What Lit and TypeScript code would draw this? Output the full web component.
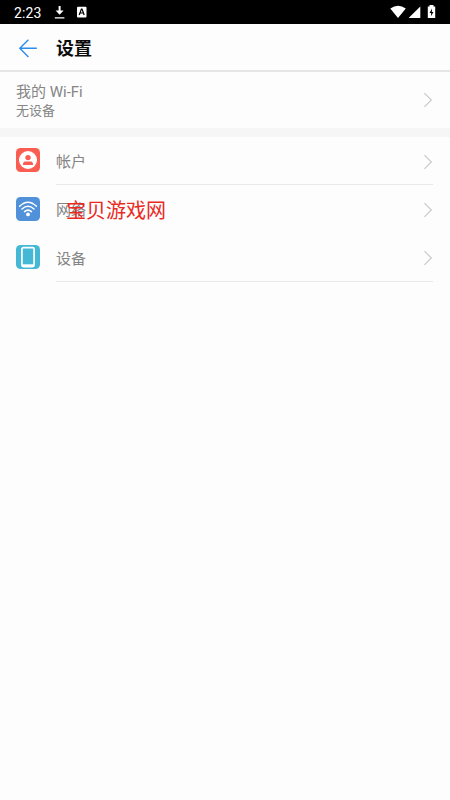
import { LitElement, html, css, svg } from "lit";
import { customElement } from "lit/decorators.js";

const chevron = html`<svg class="chevron" width="10" height="16" viewBox="0 0 10 16">
  <path d="M1.4 1.2 8.4 8 1.4 14.8" fill="none" stroke="#c8c8c8" stroke-width="1.1" />
</svg>`;

const accountIcon = svg`
  <rect width="24" height="24" rx="4.5" fill="#fa5d51" />
  <circle cx="12" cy="12" r="9" fill="#fff" />
  <circle cx="12" cy="9.6" r="2.7" fill="#fa5d51" />
  <path d="M7 17v-1.2c0-1.8 1.4-2.4 3-2.4h4c1.6 0 3 .6 3 2.4V17z" fill="#fa5d51" />`;

const networkIcon = svg`
  <rect width="24" height="24" rx="4.5" fill="#5091da" />
  <g fill="none" stroke="#fff" stroke-width="1.5" stroke-linecap="round">
    <path d="M3.6 9.3Q12 1.3 20.4 9.3" />
    <path d="M6 12Q12 6.6 18 12" />
    <path d="M8.5 14.6Q12 11.6 15.5 14.6" />
  </g>
  <circle cx="12" cy="17.4" r="1.9" fill="#fff" />`;

const deviceIcon = svg`
  <rect width="24" height="24" rx="4.5" fill="#45b8d6" />
  <rect x="5.9" y="2.6" width="12.2" height="19" rx="1.5" fill="none" stroke="#fff" stroke-width="1.7" />
  <path d="M6 20.3h12" stroke="#fff" stroke-width="2" />`;

const items = [
  { label: "帐户", icon: accountIcon, cls: "account" },
  { label: "网络", icon: networkIcon, cls: "network" },
  { label: "设备", icon: deviceIcon, cls: "device" },
];

@customElement("app-root")
export class AppRoot extends LitElement {
  static styles = css`
    :host {
      display: block;
      position: relative;
      height: 800px;
      overflow: hidden;
      background: #fdfdfd;
      color: #858585;
      font-family: Roboto, "Noto Sans CJK SC", sans-serif;
    }
    svg { display: block; flex: none; }
    .status {
      display: flex;
      align-items: center;
      height: 24px;
      box-sizing: border-box;
      padding: 0 14px;
      background: #000;
      color: #fff;
    }
    .time {
      width: 40px;
      padding-top: 2px;
      font-size: 14px;
      line-height: 22px;
      font-weight: 400;
      letter-spacing: 0.1px;
    }
    .right { margin-left: auto; }
    .header {
      display: flex;
      align-items: center;
      height: 48px;
      box-sizing: border-box;
      padding: 2px 0 0 18px;
      border-bottom: 2px solid #e6e6e6;
      color: #0c0c0c;
    }
    h1 {
      margin: 2px 0 0 18px;
      font-size: 18px;
      line-height: 26px;
      font-weight: 700;
    }
    .wifi {
      display: flex;
      align-items: center;
      justify-content: space-between;
      height: 56px;
      padding: 0 17px 0 16px;
    }
    .name { padding-top: 1px; font-size: 15px; line-height: 20px; }
    .sub { font-size: 13px; line-height: 18px; }
    .band { height: 9px; background: #f6f6f6; }
    .row {
      display: flex;
      box-sizing: border-box;
      padding: 0 17px 0 16px;
      gap: 16px;
    }
    .cell {
      flex: 1;
      display: flex;
      align-items: center;
      justify-content: space-between;
      font-size: 15px;
    }
    .cell .chevron { margin-top: 2px; }
    .account .cell, .device .cell { box-shadow: 0 1px #e9e9e9; }
    .account { height: 47px; }
    .account > svg { margin-top: 11px; }
    .network { height: 49px; }
    .network > svg { margin-top: 13px; }
    .device { height: 48px; }
    .device > svg { margin-top: 12px; }
    .mark {
      position: absolute;
      left: 66px;
      top: 196px;
      color: #ea2a1f;
      font-size: 20px;
      line-height: 30px;
      white-space: nowrap;
    }
  `;

  render() {
    return html`
      <div class="status">
        <span class="time">2:23</span>
        <svg width="36" height="16" viewBox="0 0 36 16">
          <path d="M4.6 2h2v4.5h3L5.6 10.8 1.6 6.5h3zM.8 13.2h9.6v1.3H.8z" fill="#fff" />
          <rect x="23" y="2.8" width="9.5" height="10.7" rx="1" fill="#fff" />
          <path d="M25.2 11l2.2-6h.6l2.2 6M26 9h3.4" fill="none" stroke="#000" stroke-width="1.2" />
        </svg>
        <svg class="right" width="46" height="16" viewBox="0 0 46 16">
          <path d="M.3 4.6Q8 -1.2 15.8 4.6L8 14z" fill="#fff" />
          <path d="M18.6 14 30.3 2.5V14z" fill="#fff" />
          <path d="M39.5 1h4v1.6h1.7V14h-7.4V2.6h1.7z" fill="#fff" />
          <path d="M42 4.5 39.5 9h1.7l-.3 3.3L43.5 8h-1.7z" fill="#000" />
        </svg>
      </div>
      <div class="header">
        <svg width="20" height="20" viewBox="0 0 20 20">
          <path d="M18.8 10.3H1.8M10.4 1.7 1.8 10.3 10.4 18.9" fill="none" stroke="#2b8dec" stroke-width="1.4" />
        </svg>
        <h1>设置</h1>
      </div>
      <div class="wifi">
        <div>
          <div class="name">我的 Wi-Fi</div>
          <div class="sub">无设备</div>
        </div>
        ${chevron}
      </div>
      <div class="band"></div>
      ${items.map(
        (i) => html`<div class="row ${i.cls}">
          <svg width="24" height="24" viewBox="0 0 24 24">${i.icon}</svg>
          <div class="cell"><span>${i.label}</span>${chevron}</div>
        </div>`
      )}
      <div class="mark">宝贝游戏网</div>
    `;
  }
}
